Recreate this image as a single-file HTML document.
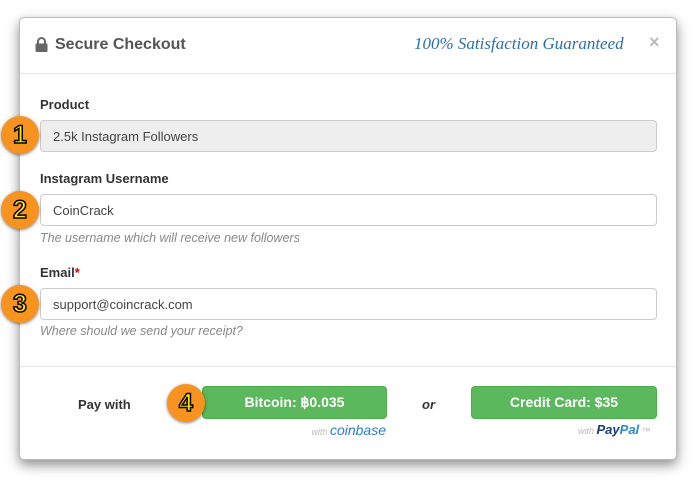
<!DOCTYPE html>
<html><head><style>
*{box-sizing:border-box;margin:0;padding:0}
body{width:700px;height:480px;background:#fff;font-family:"Liberation Sans",sans-serif;position:relative;overflow:hidden}
.modal{position:absolute;left:19px;top:17px;width:658px;height:443px;border:1px solid #bbb;border-radius:5px;background:#fff;box-shadow:0 5px 12px rgba(0,0,0,.45)}
.abs{position:absolute}
.hdr{left:0;top:0;width:656px;height:56px;border-bottom:1px solid #e3e3e3}
.lbl{font-weight:bold;font-size:13px;color:#333}
.inp{left:20px;width:617px;height:32px;border:1px solid #ccc;border-radius:4px;font-size:13px;color:#444;padding:8px 12px;background:#fff}
.help{left:20px;font-size:12.5px;font-style:italic;color:#888}
.btn{height:33px;background:#5cb85c;border:1px solid #4cae4c;border-radius:4px;color:#fff;font-weight:bold;font-size:14px;text-align:center;line-height:31px}
.c{position:absolute;width:38px;height:38px;border-radius:50%;background:#f7931e;box-shadow:0 1px 3px rgba(0,0,0,.5);text-align:center;font-weight:bold;font-size:25px;line-height:38px;color:#ffe500;-webkit-text-stroke:1.5px #000;font-family:"Liberation Sans",sans-serif}
</style></head><body>
<div class="modal">
 <div class="abs hdr">
  <svg class="abs" style="left:15px;top:19px" width="13" height="15" viewBox="0 0 13 15"><path d="M3 7V4.5a3.5 3.5 0 0 1 7 0V7" fill="none" stroke="#666" stroke-width="2"/><rect x="0.5" y="6.5" width="12" height="8.5" rx="1" fill="#666"/></svg>
  <div class="abs" style="left:35px;top:18px;font-weight:bold;font-size:16px;color:#555">Secure Checkout</div>
  <div class="abs" style="left:394px;top:16px;font-family:'Liberation Serif',serif;font-style:italic;font-size:17px;color:#2a6fa8">100% Satisfaction Guaranteed</div>
  <div class="abs" style="left:629px;top:14px;font-size:18px;color:#bbb;font-weight:bold">×</div>
 </div>
 <div class="abs lbl" style="left:20px;top:79px">Product</div>
 <div class="abs inp" style="top:102px;background:#eee">2.5k Instagram Followers</div>
 <div class="abs lbl" style="left:20px;top:153px">Instagram Username</div>
 <div class="abs inp" style="top:176px">CoinCrack</div>
 <div class="abs help" style="top:213px">The username which will receive new followers</div>
 <div class="abs lbl" style="left:20px;top:247px">Email<span style="color:#c00">*</span></div>
 <div class="abs inp" style="top:270px">support@coincrack.com</div>
 <div class="abs help" style="top:306px">Where should we send your receipt?</div>
 <div class="abs" style="left:0;top:348px;width:656px;border-top:1px solid #e3e3e3"></div>
 <div class="abs lbl" style="left:58px;top:379px">Pay with</div>
 <div class="abs btn" style="left:182px;top:368px;width:185px">Bitcoin: ฿0.035</div>
 <div class="abs" style="right:290px;top:404px;font-size:9px;color:#bbb;font-style:italic">with <span style="font-size:14px;color:#2b7bd0">coinbase</span></div>
 <div class="abs" style="left:402px;top:379px;font-weight:bold;font-style:italic;font-size:13px;color:#333">or</div>
 <div class="abs btn" style="left:451px;top:368px;width:186px">Credit Card: $35</div>
 <div class="abs" style="left:558px;top:404px;font-size:9px;color:#bbb;font-style:italic">with <span style="font-size:13px;color:#1a3a7a;font-weight:bold">Pay</span><span style="font-size:13px;color:#2b8ad0;font-weight:bold">Pal</span> ™</div>
</div>
<div class="c" style="left:1px;top:116px">1</div>
<div class="c" style="left:1px;top:191px">2</div>
<div class="c" style="left:1px;top:285px">3</div>
<div class="c" style="left:167px;top:384px">4</div>
</body></html>
